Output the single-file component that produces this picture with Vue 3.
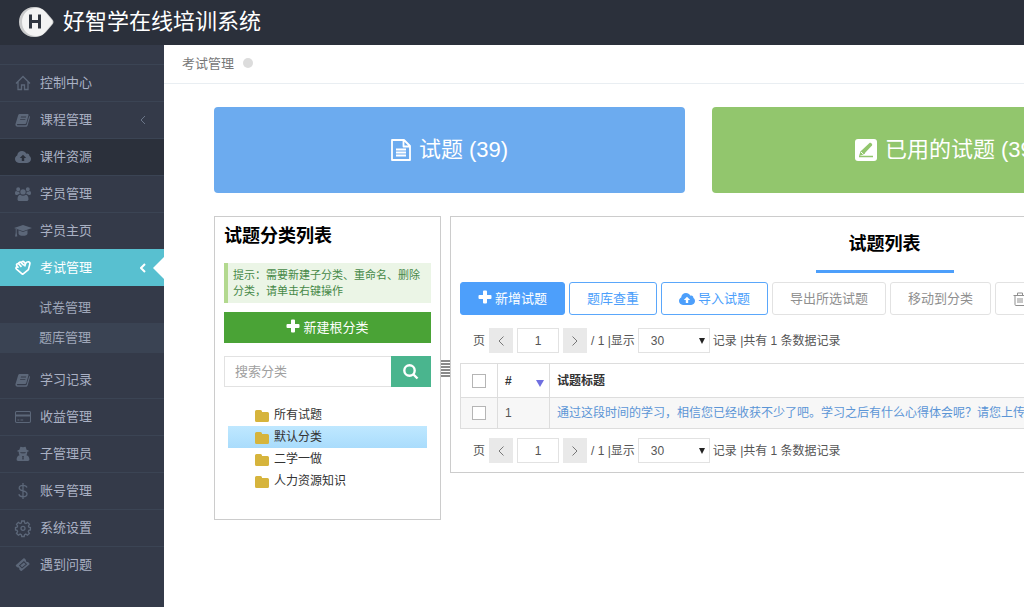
<script setup>
import { ref } from 'vue'

const icons = {
  home: { s: 'M1 8.500 8 1.500l7 7M3 7v7.500h3.500V10h3v4.500H13V7' },
  book: {
    f: 'M5 2h7.600c.7 0 1.100.5.900 1.200L11.300 11c-.2.700-.8 1.100-1.500 1.100H2.500c-.8 0-.9 1.200 0 1.200h7.900c.7 0 1.200-.3 1.400-1L14.200 4c.7.300.9.800.7 1.500l-2.300 7.900c-.3.900-.9 1.300-1.800 1.300H2.500c-1.500 0-2.500-1.300-2-2.700L3.100 3.400C3.400 2.500 4.100 2 5 2zM6 4.500l-.3.900h5.200l.3-.9zm-.7 2.400-.3.900h5.200l.3-.9z'
  },
  cloud: {
    f: 'M4 14C1.800 14 0 12.300 0 10.100c0-1.600.9-2.900 2.200-3.500C2.300 4 4.400 2 7 2c1.900 0 3.500 1.100 4.300 2.700.3-.1.600-.2.900-.2 1.300 0 2.300 1 2.200 2.400 1 .700 1.600 1.900 1.600 3.200 0 2.200-1.700 3.900-3.800 3.900zM8 5.800 4.800 9h2v3h2.400V9h2z'
  },
  users: {
    f: 'M8 3.200a2.700 2.700 0 1 1 0 5.400 2.700 2.700 0 0 1 0-5.400zM3.200 1.200a2 2 0 1 1 0 4 2 2 0 0 1 0-4zm9.600 0a2 2 0 1 1 0 4 2 2 0 0 1 0-4zM2.500 13.200C2.500 10.300 3.700 8.700 5.300 8.700 6 9.300 7 9.700 8 9.700s2-.4 2.700-1c1.600 0 2.800 1.600 2.800 4.500 0 1.200-.8 1.800-1.800 1.800H4.300c-1 0-1.800-.6-1.800-1.800zM0 7.300C0 5.900.5 5 1.300 5c.5.500 1.200.7 1.900.7.500 0 .900-.1 1.200-.2-.2 1 0 1.800.4 2.500-1 0-1.900.400-2.500 1.100H1.500C.6 9.100 0 8.500 0 7.300zm16 0c0-1.400-.5-2.300-1.300-2.300-.5.500-1.200.7-1.900.7-.5 0-.9-.1-1.200-.2.200 1 0 1.800-.4 2.500 1 0 1.900.400 2.500 1.100h.8c.9 0 1.500-.6 1.500-1.800z'
  },
  cap: {
    f: 'M8 2l9 3-9 3.200L-1 5zM3.500 7.300 8 9l4.500-1.700v3.400c0 1-2 2.100-4.500 2.100s-4.500-1.100-4.500-2.100zM.7 5.600h1v4.200l.6 3.700H0l.7-3.700z'
  },
  hand: {
    s: 'M7.600 14.300 1.500 9.200c-1.300-1.300.1-3 1.500-2L1.800 5.700c-.9-1.500.8-2.800 2-1.700l2.700 2.800M3.800 4c-.400-1.500 1.500-2.400 2.500-1.200l2.600 2.500M6.300 2.800c.2-1.500 2-1.800 2.900-.700l1.300 1.500c.8-1.200 1.700-2 3-1.800 1.600.3 1.600 1.600 1.200 2.800l-1.300 5-5.800 4.700M10.500 3.600l-.800 2.800'
  },
  card: { f: 'M1.700 2h12.600c1 0 1.700.7 1.700 1.700v8.600c0 1-.7 1.700-1.700 1.700H1.700C.7 14 0 13.300 0 12.300V3.700C0 2.700.7 2 1.700 2zM1 5.500h14V3.700c0-.4-.3-.7-.7-.7H1.700c-.4 0-.7.3-.7.700zM1 7.500v4.800c0 .4.3.7.700.7h12.600c.4 0 .7-.3.700-.7V7.500zm1.500 3h1.800v1H2.500zm3 0h2.700v1H5.500z' },
  agent: {
    f: 'M5.300 1c.8-.4 1.500.2 2.700.2S9.900.6 10.700 1l.9 2.700 2 .700v1l-1.400.400c.1 1.700-.1 2.600-.8 3.500 2 .5 3 2 3 4.300 0 .9-.5 1.400-1.400 1.400H3c-.9 0-1.400-.5-1.400-1.400 0-2.300 1-3.800 3-4.300-.7-.9-.9-1.800-.8-3.500l-1.400-.4v-1l2-.7zM5.300 6.200v.7l2.200.5.500-.5.500.5 2.200-.5v-.7zM7 10l.5 1-.5 2.500h.6l.4-1.500.4 1.500H9L8.500 11l.5-1z'
  },
  dollar: { s: 'M8 0v16M12 4.500C11.500 3 10 2.400 8 2.400c-2.200 0-3.800 1-3.800 2.700 0 4 7.800 1.700 7.800 5.900 0 1.700-1.700 2.700-4 2.700-2.200 0-3.700-.8-4.200-2.500' },
  gear: {
    s: 'M6.700 1h2.600l.4 2 1.200.5 1.700-1.100 1.900 1.900-1.100 1.700.5 1.200 1.500.4v2.300l-1.600.4-.5 1.300 1.100 1.700-1.900 1.900-1.700-1.100-1.200.5-.4 1.900H6.700l-.4-1.900-1.200-.5-1.700 1.100-1.900-1.900 1.100-1.700-.5-1.300-1.600-.4V7.600l1.600-.4.5-1.200-1.100-1.700 1.900-1.900 1.700 1.100L6.300 3zM8 6.300a2 2 0 1 1 0 4 2 2 0 0 1 0-4z'
  },
  ticket: {
    f: 'M9.600 1.500 11 2.900c-.3 1.300.8 2.400 2.100 2.100l1.300 1.400c.4.400.4.800 0 1.200l-7.500 6.200c-.4.400-.9.300-1.300 0l-1.300-1.300c.4-1.300-.8-2.500-2.100-2.100L1 9.100c-.4-.4-.4-.8 0-1.200l7.400-6.400c.4-.4.8-.4 1.200 0zM8.900 4 3.900 8.400 7 11.600l5.100-4.400zm0 1.400 1.800 1.800L7 10.300 5.300 8.500z'
  }
}

const topMenu = [
  { label: '控制中心', icon: 'home' },
  { label: '课程管理', icon: 'book', more: true },
  { label: '课件资源', icon: 'cloud', dark: true },
  { label: '学员管理', icon: 'users' },
  { label: '学员主页', icon: 'cap' },
  { label: '考试管理', icon: 'hand', more: true, active: true }
]
const subMenu = ['试卷管理', '题库管理']
const bottomMenu = [
  { label: '学习记录', icon: 'book' },
  { label: '收益管理', icon: 'card' },
  { label: '子管理员', icon: 'agent' },
  { label: '账号管理', icon: 'dollar' },
  { label: '系统设置', icon: 'gear' },
  { label: '遇到问题', icon: 'ticket' }
]
const menus = [
  { items: topMenu, children: subMenu },
  { items: bottomMenu, children: [] }
]

const categories = ['所有试题', '默认分类', '二学一做', '人力资源知识']
const selected = ref('默认分类')
const keyword = ref('')
const page = ref('1')
const size = ref('30')
</script>

<template>
  <div class="app">
    <header class="top">
      <svg class="logo" viewBox="0 0 36 32" aria-hidden="true">
        <path d="M16 1c6 0 9 2 12 5l6 7c2 2 2 4 0 6l-6 7c-3 3-6 5-12 5C7 31 1 24 1 16S7 1 16 1z" fill="#c9cacb" />
        <path d="M18 2c5 0 8 2 10 5l5 6c2 2 2 4 0 6l-5 6c-2 3-5 5-10 5C10 30 4 24 4 16S10 2 18 2z" fill="#f3f3f3" />
        <path d="M12.500 8.500v14M21.500 8.500v14M12.500 15.500h9" fill="none" stroke="#303640" stroke-width="3" />
      </svg>
      <h1>好智学在线培训系统</h1>
    </header>

    <div class="body">
      <nav class="side" aria-label="主菜单">
        <template v-for="(group, g) in menus" :key="g">
          <a
            v-for="item in group.items"
            :key="item.label"
            href="#"
            class="item"
            :class="{ dark: item.dark, active: item.active }"
          >
            <svg class="mi" viewBox="0 0 16 16" aria-hidden="true">
              <path v-if="icons[item.icon].f" class="fill" :d="icons[item.icon].f" />
              <path v-if="icons[item.icon].s" class="line" :d="icons[item.icon].s" />
            </svg>
            <span>{{ item.label }}</span>
            <svg v-if="item.more" class="chev" viewBox="0 0 6 10" aria-hidden="true"><path d="M5 1 1 5l4 4" /></svg>
          </a>
          <div v-if="group.children.length" class="sub">
            <a v-for="(c, i) in group.children" :key="c" href="#" :class="{ on: i === 1 }">{{ c }}</a>
          </div>
        </template>
      </nav>

      <main class="main">
        <div class="crumb"><span>考试管理</span><i class="dot"></i></div>

        <div class="content">
          <div class="cards">
            <a href="#" class="card blue">
              <svg class="c-file" viewBox="0 0 20 22" aria-hidden="true">
                <path d="M1 1h12l6 6v14H1zM12.500 1v6.500H19M5 10.500h10M5 13.500h10M5 16.500h10" />
              </svg>
              <span>试题 (39)</span>
            </a>
            <a href="#" class="card green">
              <svg class="c-edit" viewBox="0 0 22 22" aria-hidden="true">
                <rect width="22" height="22" rx="3" fill="#fff" />
                <path d="M4 17l1.500-4.500L14.500 4c1-.8 3.500 1.300 2.500 2.500l-8.500 9z" fill="#92c66d" />
                <path d="M4 17.500h14M6.500 12l3 2.800" fill="none" stroke="#92c66d" stroke-width="1.500" />
                <path d="M6 13l2.500 2.300" stroke="#fff" stroke-width="1" />
              </svg>
              <span>已用的试题 (39)</span>
            </a>
          </div>

          <div class="panels">
            <section class="panel tree-panel">
              <h2>试题分类列表</h2>
              <p class="tip">提示：需要新建子分类、重命名、删除分类，请单击右键操作</p>
              <button type="button" class="new-root">
                <svg class="plus" viewBox="0 0 14 14" aria-hidden="true"><path d="M5 1.500Q5 .5 6 .5h2q1 0 1 1V5h3.500q1 0 1 1v2q0 1-1 1H9v3.500q0 1-1 1H6q-1 0-1-1V9H1.500q-1 0-1-1V6q0-1 1-1H5z" /></svg>
                新建根分类
              </button>
              <form class="search" @submit.prevent>
                <input v-model="keyword" type="text" placeholder="搜索分类" aria-label="搜索分类" />
                <button type="submit" aria-label="搜索">
                  <svg viewBox="0 0 16 16" aria-hidden="true"><circle cx="6.500" cy="6.500" r="5.200" /><path d="m10.500 10.500 4 4" /></svg>
                </button>
              </form>
              <ul class="tree">
                <li v-for="c in categories" :key="c">
                  <button type="button" :class="{ on: c === selected }" @click="selected = c">
                    <svg viewBox="0 0 14 12" aria-hidden="true"><path d="M1.500 0h4Q7 0 7 1.500V2h5.500Q14 2 14 3.500v7q0 1.500-1.500 1.500h-11Q0 12 0 10.500v-9Q0 0 1.500 0z" /></svg>
                    {{ c }}
                  </button>
                </li>
              </ul>
            </section>

            <div class="grip"></div>

            <section class="panel list-panel">
              <div class="list-head"><h2>试题列表</h2></div>
              <div class="tools">
                <button type="button" class="btn solid">
                  <svg class="plus" viewBox="0 0 14 14" aria-hidden="true"><path d="M5 1.500Q5 .5 6 .5h2q1 0 1 1V5h3.500q1 0 1 1v2q0 1-1 1H9v3.500q0 1-1 1H6q-1 0-1-1V9H1.500q-1 0-1-1V6q0-1 1-1H5z" /></svg>
                  新增试题
                </button>
                <button type="button" class="btn outline">题库查重</button>
                <button type="button" class="btn outline">
                  <svg class="up" viewBox="0 0 16 16" aria-hidden="true"><path fill-rule="evenodd" :d="icons.cloud.f" /></svg>
                  导入试题
                </button>
                <button type="button" class="btn">导出所选试题</button>
                <button type="button" class="btn">移动到分类</button>
                <button type="button" class="btn" aria-label="删除">
                  <svg class="trash" viewBox="0 0 14 14" aria-hidden="true"><path d="M.5 3.500h13M4.500 3V1h5v2M2 4v8.500q0 1 1 1h8q1 0 1-1V4M5 6v5M7 6v5M9 6v5" /></svg>
                </button>
              </div>

              <template v-for="pos in ['top', 'bottom']" :key="pos">
                <div class="pager">
                  <label :for="'page-' + pos">页</label>
                  <button type="button" class="prev" aria-label="上一页"><svg viewBox="0 0 6 10" aria-hidden="true"><path d="M5.500.5 1 5l4.500 4.500" /></svg></button>
                  <input :id="'page-' + pos" v-model="page" type="text" />
                  <button type="button" class="next" aria-label="下一页"><svg viewBox="0 0 6 10" aria-hidden="true"><path d="M.5.5 5 5 .5 9.500" /></svg></button>
                  <label :for="'size-' + pos" class="show">/ 1 |显示</label>
                  <span class="select">
                    <select :id="'size-' + pos" v-model="size"><option>30</option><option>50</option></select>
                    <i class="caret"></i>
                  </span>
                  <span class="total">记录 |共有 1 条数据记录</span>
                </div>
                <table v-if="pos === 'top'">
                  <thead>
                    <tr>
                      <th class="ck"><input type="checkbox" aria-label="全选" /></th>
                      <th class="num"><span># <i class="sort"></i></span></th>
                      <th>试题标题</th>
                    </tr>
                  </thead>
                  <tbody>
                    <tr>
                      <td class="ck"><input type="checkbox" aria-label="选择第 1 行" /></td>
                      <td class="num">1</td>
                      <td><a href="#">通过这段时间的学习，相信您已经收获不少了吧。学习之后有什么心得体会呢？请您上传一</a></td>
                    </tr>
                  </tbody>
                </table>
              </template>
            </section>
          </div>
        </div>
      </main>
    </div>
  </div>
</template>

<style>
html,
body {
  background: #fff;
}
</style>

<style scoped>
* {
  box-sizing: border-box;
}
.app {
  display: flex;
  flex-direction: column;
  min-height: 100vh;
  overflow: hidden;
  font: 13px/20px "Liberation Sans", "Noto Sans CJK SC", sans-serif;
  color: #555;
}
button,
input,
select {
  font: inherit;
  color: inherit;
  margin: 0;
  padding: 0;
}
button {
  border: 0;
  cursor: pointer;
}
a {
  text-decoration: none;
}
h1,
h2,
p,
ul {
  margin: 0;
  padding: 0;
}
.top {
  display: flex;
  align-items: center;
  gap: 9px;
  height: 45px;
  padding: 0 0 2px 18px;
  background: #2b303b;
}
.logo {
  width: 36px;
  height: 32px;
}
.top h1 {
  font-size: 22px;
  line-height: 30px;
  font-weight: 400;
  color: #fff;
}
.body {
  display: flex;
  flex: 1;
}
.side {
  flex: none;
  width: 164px;
  padding-top: 19px;
  background: #343a49;
}
.item {
  position: relative;
  display: flex;
  align-items: center;
  height: 37px;
  padding: 0 18px 0 15px;
  border-top: 1px solid #3b4454;
  color: #aab1c4;
}
.item.dark {
  background: #2b303b;
}
.item.active {
  background: #58c0d0;
  border-color: #58c0d0;
  color: #fff;
}
.item.active::after {
  content: "";
  position: absolute;
  right: 0;
  top: 7px;
  border: 11px solid transparent;
  border-left-width: 0;
  border-right-color: #fff;
}
.mi {
  width: 16px;
  height: 16px;
  margin-right: 9px;
  color: #5c6779;
  overflow: visible;
}
.active .mi {
  color: #fff;
}
.fill {
  fill: currentColor;
  fill-rule: evenodd;
}
.line {
  fill: none;
  stroke: currentColor;
  stroke-width: 1.3;
}
.active .line {
  stroke-width: 1.7;
  stroke-linejoin: round;
}
.chev {
  width: 6px;
  height: 10px;
  margin-left: auto;
  fill: none;
  stroke: #6a7588;
}
.active .chev {
  stroke: #fff;
  stroke-width: 2;
}
.sub {
  padding: 7px 0 8px;
}
.sub a {
  display: block;
  padding-left: 39px;
  line-height: 30px;
  color: #9fa7b9;
}
.sub a.on {
  background: #3a4353;
}
.sub + .item {
  border-color: transparent;
}
.main {
  flex: 1;
  min-width: 0;
}
.crumb {
  display: flex;
  align-items: center;
  gap: 9px;
  height: 39px;
  padding-left: 18px;
  border-bottom: 1px solid #e9eef2;
  color: #777;
}
.dot {
  width: 10px;
  height: 10px;
  margin-bottom: 2px;
  border-radius: 50%;
  background: #dcdcdc;
}
.content {
  padding: 23px 0 40px 50px;
}
.cards {
  display: grid;
  grid-template-columns: repeat(2, minmax(471px, 1fr));
  gap: 27px;
}
.card {
  display: flex;
  align-items: center;
  justify-content: center;
  gap: 8px;
  padding: 28px 0;
  border-radius: 4px;
  font-size: 22px;
  line-height: 30px;
  color: #fff;
}
.blue {
  background: #6cabef;
}
.green {
  background: #92c66d;
}
.c-file {
  width: 20px;
  height: 22px;
  fill: none;
  stroke: #fff;
  stroke-width: 1.8;
  stroke-linejoin: round;
}
.c-edit {
  width: 22px;
  height: 22px;
}
.panels {
  display: flex;
  align-items: flex-start;
  margin-top: 23px;
}
.panel {
  border: 1px solid #ccc;
  padding: 0 9px 9px;
}
.panel h2 {
  font-size: 18px;
  line-height: 26px;
  color: #000;
}
.tree-panel {
  flex: none;
  width: 227px;
  min-height: 304px;
  padding-top: 6px;
}
.tip {
  margin-top: 14px;
  padding: 4px 8px 4px 5px;
  border-left: 4px solid #b3d98f;
  background: #ebf5e6;
  font-size: 11px;
  line-height: 16px;
  color: #468847;
}
.new-root {
  display: flex;
  align-items: center;
  justify-content: center;
  gap: 3px;
  width: 100%;
  height: 31px;
  margin-top: 9px;
  background: #4aa336;
  color: #fff;
}
.plus {
  width: 14px;
  height: 14px;
  margin-bottom: 3px;
  fill: currentColor;
}
.search {
  display: flex;
  height: 31px;
  margin-top: 13px;
}
.search input {
  flex: 1;
  min-width: 0;
  padding: 0 10px;
  border: 1px solid #e2e2e2;
  border-right: 0;
}
.search input::placeholder {
  color: #a0a0a0;
}
.search button {
  width: 40px;
  background: #4ab58e;
}
.search svg {
  display: block;
  width: 16px;
  height: 16px;
  margin: 0 auto;
  fill: none;
  stroke: #fff;
  stroke-width: 2.4;
}
.tree {
  margin: 17px 4px 0;
  list-style: none;
}
.tree button {
  display: flex;
  align-items: center;
  gap: 5px;
  width: 100%;
  height: 22px;
  padding-left: 27px;
  background: none;
  font-size: 12px;
  color: #333;
}
.tree button.on {
  background: linear-gradient(#bfe8ff, #a9dcfc);
}
.tree svg {
  width: 14px;
  height: 12px;
  margin-top: 2px;
  fill: #d6b43c;
}
.grip {
  flex: none;
  width: 9px;
  height: 17px;
  margin-top: 144px;
  background: repeating-linear-gradient(#8a8a8a 0 2px, #fff 2px 3px);
}
.list-panel {
  flex: 1 0 869px;
}
.list-head {
  display: flex;
  justify-content: center;
}
.list-head h2 {
  padding: 14px 33px 13px;
  border-bottom: 3px solid #4d9ffb;
}
.tools {
  display: flex;
  gap: 4px;
  margin-top: 9px;
}
.btn {
  display: flex;
  align-items: center;
  gap: 3px;
  height: 33px;
  padding: 0 17px;
  border: 1px solid #e2e2e2;
  border-radius: 3px;
  background: #fff;
  color: #8f8f8f;
  white-space: nowrap;
}
.btn.outline {
  border-color: #5aa7fb;
  color: #4d9ffb;
}
.btn.solid {
  border-color: #4d9ffb;
  background: #4d9ffb;
  color: #fff;
}
.up {
  width: 16px;
  height: 16px;
  fill: currentColor;
}
.trash {
  width: 14px;
  height: 14px;
  fill: none;
  stroke: currentColor;
}
.pager {
  display: flex;
  align-items: center;
  height: 25px;
  margin-top: 13px;
  padding-left: 13px;
  font-size: 12px;
  white-space: nowrap;
}
.pager button {
  width: 24px;
  height: 25px;
  background: #e9e9e9;
}
.pager button svg {
  display: block;
  width: 6px;
  height: 10px;
  margin: 0 auto;
  fill: none;
  stroke: #777;
}
.pager .prev {
  margin-left: 4px;
}
.pager input {
  width: 42px;
  height: 25px;
  margin: 0 4px;
  border: 1px solid #e2e2e2;
  text-align: center;
}
.show {
  margin: 0 3px 0 4px;
}
.select {
  position: relative;
}
.select select {
  display: block;
  width: 72px;
  height: 25px;
  padding-left: 12px;
  border: 1px solid #e2e2e2;
  border-radius: 0;
  background: #fff;
  appearance: none;
}
.caret {
  position: absolute;
  right: 5px;
  top: 10px;
  border: 3px solid transparent;
  border-top: 6px solid #222;
  border-bottom: 0;
  pointer-events: none;
}
.total {
  margin-left: 3px;
}
table {
  width: 100%;
  margin-top: 10px;
  margin-bottom: -4px;
  border-collapse: collapse;
  font-size: 12px;
  line-height: 16px;
}
th,
td {
  border: 1px solid #ddd;
  padding: 7px;
  text-align: left;
}
th {
  height: 34px;
  color: #333;
}
td {
  height: 31px;
  background: #f7f7f7;
}
td a {
  color: #5b95d6;
  white-space: nowrap;
}
.ck {
  width: 37px;
  padding: 0;
  text-align: center;
}
.ck input {
  display: block;
  width: 14px;
  height: 14px;
  margin: 0 auto;
  border: 1px solid #b5b5b5;
  background: #fff;
  appearance: none;
}
.num {
  width: 52px;
}
.num span {
  display: flex;
  align-items: center;
  justify-content: space-between;
}
.sort {
  border: 4px solid transparent;
  border-top: 7px solid #6f6fe0;
  border-bottom: 0;
  margin: 6px -2px 0 0;
}
</style>
